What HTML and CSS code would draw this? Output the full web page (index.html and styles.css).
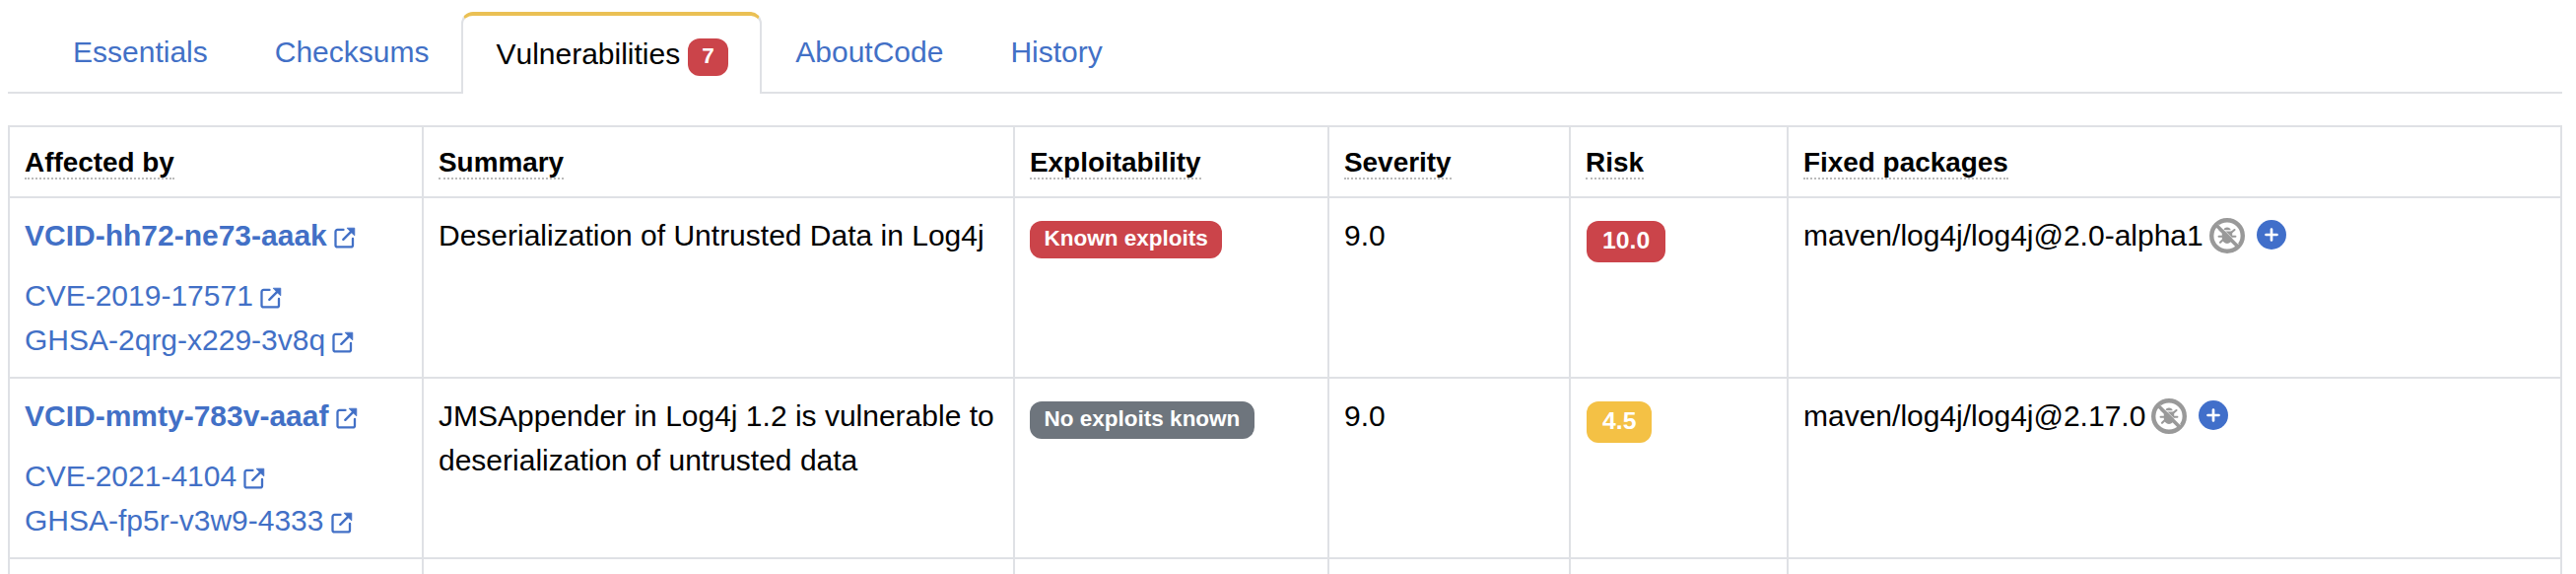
FILE: index.html
```html
<!DOCTYPE html>
<html lang="en">
<head>
<meta charset="utf-8">
<title>Vulnerabilities</title>
<link rel="stylesheet" href="styles.css">
</head>
<body>
<svg class="symbols" aria-hidden="true">
  <symbol id="external" viewBox="0 0 22 22">
    <path d="M9.5 2.9H3.5A2 2 0 0 0 1.5 4.9V18.4A2 2 0 0 0 3.5 20.4H17A2 2 0 0 0 19 18.4V12" fill="none" stroke="currentColor" stroke-width="2.3" stroke-linecap="round"/>
    <path d="M9.3 12.8 18 4.1" fill="none" stroke="currentColor" stroke-width="2.4" stroke-linecap="round"/>
    <path d="M13.2 1.2H20.8V8.8L18.5 6.8 15.2 3.5Z" fill="currentColor" stroke="currentColor" stroke-width=".8" stroke-linejoin="round"/>
  </symbol>
  <symbol id="nobug" viewBox="0 0 36 36">
    <circle cx="18" cy="18" r="15.8" fill="none" stroke="currentColor" stroke-width="4.4"/>
    <path d="M14.3 12.2a3.8 3.4 0 0 1 7.4 0ZM12.8 13.4H23.2V20.5A5.2 5.4 0 0 1 12.8 20.5Z" fill="currentColor"/>
    <path d="M13.5 14.5 10.5 12M22.5 14.5 25.5 12M13 18.8H9.6M23 18.8H26.4M13.6 22.3 11 24.8M22.4 22.3 25 24.8" fill="none" stroke="currentColor" stroke-width="2.1" stroke-linecap="round"/>
    <path d="M9 6.5 29.5 27" stroke="#fff" stroke-width="1"/>
    <path d="M7 7.3 28.8 29.1" stroke="currentColor" stroke-width="3.6"/>
  </symbol>
  <symbol id="plus" viewBox="0 0 30 30">
    <circle cx="15" cy="15" r="15" fill="currentColor"/>
    <path d="M15 9.5V20.5M9.5 15H20.5" stroke="#fff" stroke-width="2.7" stroke-linecap="round"/>
  </symbol>
</svg>
<nav class="tabs">
  <a class="tab">Essentials</a>
  <a class="tab">Checksums</a>
  <a class="tab active">Vulnerabilities <span class="badge count red">7</span></a>
  <a class="tab">AboutCode</a>
  <a class="tab">History</a>
</nav>
<table class="vulns">
  <colgroup><col class="c-affected"><col class="c-summary"><col class="c-exploit"><col class="c-severity"><col class="c-risk"><col class="c-fixed"></colgroup>
  <thead>
    <tr>
      <th><span class="hint">Affected by</span></th>
      <th><span class="hint">Summary</span></th>
      <th><span class="hint">Exploitability</span></th>
      <th><span class="hint">Severity</span></th>
      <th><span class="hint">Risk</span></th>
      <th><span class="hint">Fixed packages</span></th>
    </tr>
  </thead>
  <tbody>
    <tr>
      <td>
        <a class="vcid">VCID-hh72-ne73-aaak <svg class="ext"><use href="#external"/></svg></a>
        <a class="alias">CVE-2019-17571 <svg class="ext"><use href="#external"/></svg></a>
        <a class="alias">GHSA-2qrg-x229-3v8q <svg class="ext"><use href="#external"/></svg></a>
      </td>
      <td>Deserialization of Untrusted Data in Log4j</td>
      <td><span class="badge red">Known exploits</span></td>
      <td>9.0</td>
      <td><span class="badge risk red">10.0</span></td>
      <td><div class="package">maven/log4j/log4j@2.0-alpha1<svg class="nobug"><use href="#nobug"/></svg><svg class="plus"><use href="#plus"/></svg></div></td>
    </tr>
    <tr>
      <td>
        <a class="vcid">VCID-mmty-783v-aaaf <svg class="ext"><use href="#external"/></svg></a>
        <a class="alias">CVE-2021-4104 <svg class="ext"><use href="#external"/></svg></a>
        <a class="alias">GHSA-fp5r-v3w9-4333 <svg class="ext"><use href="#external"/></svg></a>
      </td>
      <td>JMSAppender in Log4j 1.2 is vulnerable to deserialization of untrusted data</td>
      <td><span class="badge gray">No exploits known</span></td>
      <td>9.0</td>
      <td><span class="badge risk yellow">4.5</span></td>
      <td><div class="package">maven/log4j/log4j@2.17.0<svg class="nobug"><use href="#nobug"/></svg><svg class="plus"><use href="#plus"/></svg></div></td>
    </tr>
    <tr class="stub"><td></td><td></td><td></td><td></td><td></td><td></td></tr>
  </tbody>
</table>
</body>
</html>
```
FILE: styles.css
```css
* { box-sizing: border-box; }
html, body { height: 582px; overflow: hidden; }
body {
  margin: 0;
  padding: 12px 14px 0 8px;
  background: #fff;
  color: #000;
  font: 30px/45px "Liberation Sans", Arial, sans-serif;
  font-kerning: none;
}
.symbols { display: none; }

.tabs {
  display: flex;
  height: 83px;
  padding-left: 31px;
  box-shadow: inset 0 -2px #dfe1e5;
}
.tab {
  height: 83px;
  padding: 18px 33px 0 35px;
  color: #4270c6;
  white-space: nowrap;
}
.tab.active {
  padding: 16px 32px 0 33px;
  color: #000;
  background: #fff;
  border: 2px solid #dfe1e5;
  border-top: 4px solid #eac054;
  border-bottom: 0;
  border-radius: 12px 12px 0 0;
}
.tab.active + .tab { padding-left: 34px; }

.badge {
  display: inline-block;
  padding: 7px 14.6px 8.5px;
  border-radius: 12px;
  color: #fff;
  font-size: 22.5px;
  font-weight: 700;
  line-height: 1;
  vertical-align: baseline;
}
.count { margin-left: -1px; vertical-align: 1px; }
.risk {
  margin-left: 1px;
  padding: 8px 16px 9.3px;
  font-size: 24.75px;
  vertical-align: -3px;
}
.red { background: #cb444a; }
.gray { background: #6e757d; }
.yellow { background: #f4c145; }

.vulns {
  width: 2592px;
  margin-top: 32px;
  table-layout: fixed;
  border-spacing: 0;
  border-right: 2px solid #dfe1e5;
}
.c-affected { width: 420px; }
.c-summary { width: 600px; }
.c-exploit { width: 319px; }
.c-severity { width: 245px; }
.c-risk { width: 221px; }
.c-fixed { width: 785px; }
th, td {
  padding: 15px 15px 0;
  border-top: 2px solid #dfe1e5;
  border-left: 2px solid #dfe1e5;
  text-align: left;
  vertical-align: top;
}
th { height: 72px; padding-top: 13px; font-size: 27.9px; }
td { height: 183px; }
.stub td { height: 17px; padding: 0; }
.hint { border-bottom: 2px dotted #bbb; }

.vcid, .alias {
  display: block;
  height: 45px;
  color: #4270c6;
  white-space: nowrap;
}
.vcid { margin-bottom: 16px; font-weight: 700; }
.ext { width: 22px; height: 22px; margin-left: -1px; vertical-align: -3px; }
.package { display: flex; align-items: center; height: 45px; }
.nobug { width: 36px; height: 36px; margin-left: 6px; color: #999; }
.plus { width: 30px; height: 30px; margin: 0 0 2px 12px; color: #416fca; }
```
